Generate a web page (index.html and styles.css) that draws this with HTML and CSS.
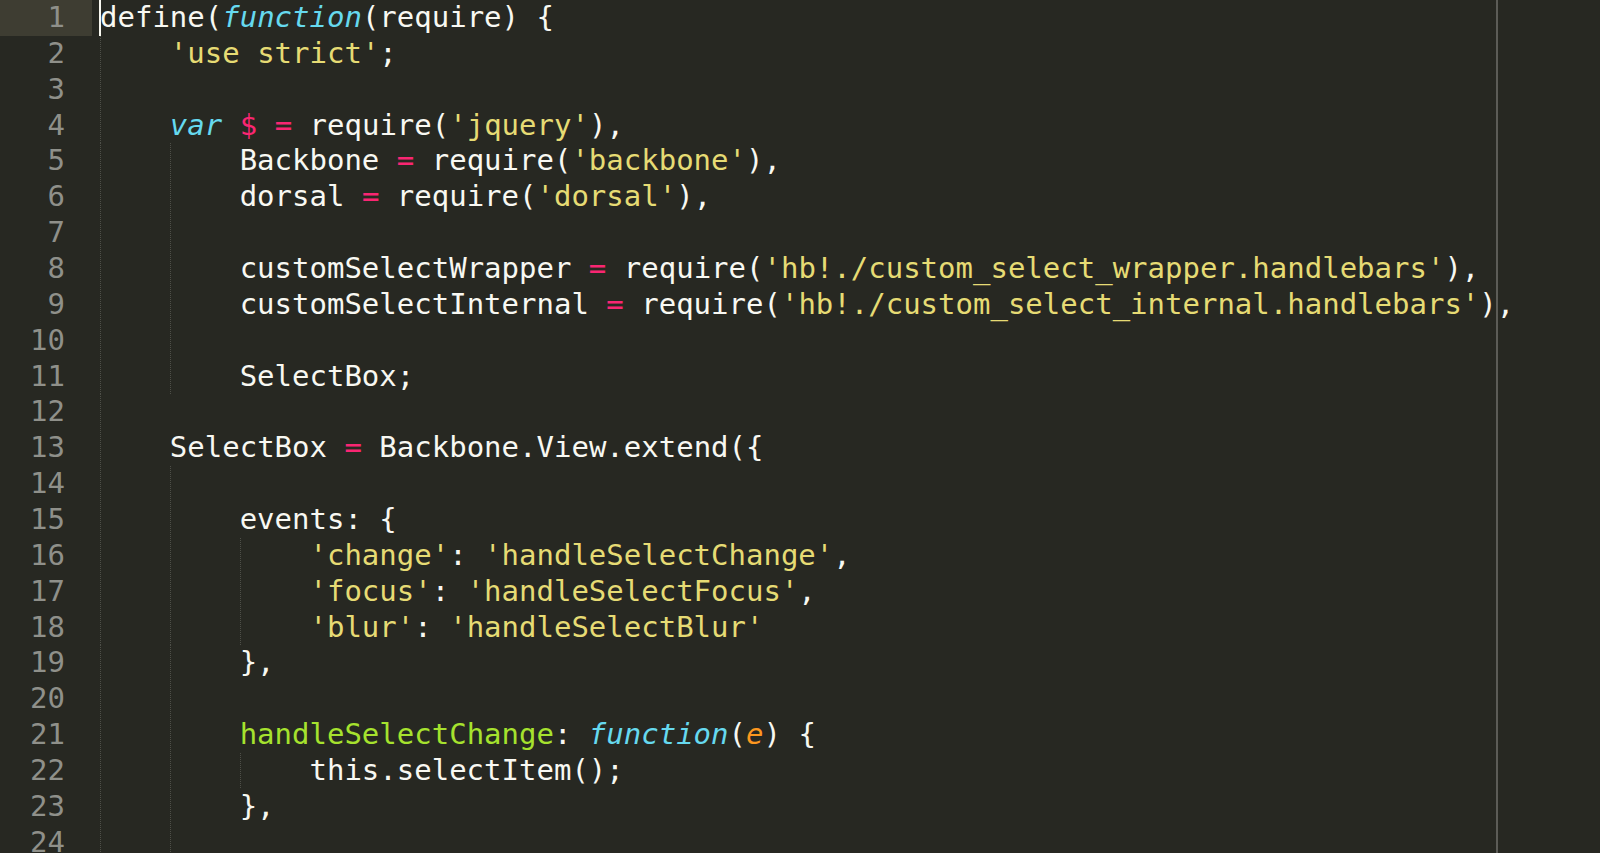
FILE: index.html
```html
<!DOCTYPE html>
<html>
<head>
<meta charset="utf-8">
<link rel="stylesheet" href="styles.css">
</head>
<body>
<div class="editor">
  <div class="ln cur"><span class="num">1</span><span class="code"><span class="cursor"></span><span class="t">define(<span class="kw">function</span>(require) {</span></span></div>
  <div class="ln"><span class="num">2</span><span class="code"><span class="ig"></span><span class="t"><span class="s">'use strict'</span>;</span></span></div>
  <div class="ln"><span class="num">3</span><span class="code"><span class="ig"></span></span></div>
  <div class="ln"><span class="num">4</span><span class="code"><span class="ig"></span><span class="t"><span class="kw">var</span> <span class="op">$</span> <span class="op">=</span> require(<span class="s">'jquery'</span>),</span></span></div>
  <div class="ln"><span class="num">5</span><span class="code"><span class="ig"></span><span class="ig"></span><span class="t">Backbone <span class="op">=</span> require(<span class="s">'backbone'</span>),</span></span></div>
  <div class="ln"><span class="num">6</span><span class="code"><span class="ig"></span><span class="ig"></span><span class="t">dorsal <span class="op">=</span> require(<span class="s">'dorsal'</span>),</span></span></div>
  <div class="ln"><span class="num">7</span><span class="code"><span class="ig"></span><span class="ig"></span></span></div>
  <div class="ln"><span class="num">8</span><span class="code"><span class="ig"></span><span class="ig"></span><span class="t">customSelectWrapper <span class="op">=</span> require(<span class="s">'hb!./custom_select_wrapper.handlebars'</span>),</span></span></div>
  <div class="ln"><span class="num">9</span><span class="code"><span class="ig"></span><span class="ig"></span><span class="t">customSelectInternal <span class="op">=</span> require(<span class="s">'hb!./custom_select_internal.handlebars'</span>),</span></span></div>
  <div class="ln"><span class="num">10</span><span class="code"><span class="ig"></span><span class="ig"></span></span></div>
  <div class="ln"><span class="num">11</span><span class="code"><span class="ig"></span><span class="ig"></span><span class="t">SelectBox;</span></span></div>
  <div class="ln"><span class="num">12</span><span class="code"><span class="ig"></span></span></div>
  <div class="ln"><span class="num">13</span><span class="code"><span class="ig"></span><span class="t">SelectBox <span class="op">=</span> Backbone.View.extend({</span></span></div>
  <div class="ln"><span class="num">14</span><span class="code"><span class="ig"></span><span class="ig"></span></span></div>
  <div class="ln"><span class="num">15</span><span class="code"><span class="ig"></span><span class="ig"></span><span class="t">events: {</span></span></div>
  <div class="ln"><span class="num">16</span><span class="code"><span class="ig"></span><span class="ig"></span><span class="ig"></span><span class="t"><span class="s">'change'</span>: <span class="s">'handleSelectChange'</span>,</span></span></div>
  <div class="ln"><span class="num">17</span><span class="code"><span class="ig"></span><span class="ig"></span><span class="ig"></span><span class="t"><span class="s">'focus'</span>: <span class="s">'handleSelectFocus'</span>,</span></span></div>
  <div class="ln"><span class="num">18</span><span class="code"><span class="ig"></span><span class="ig"></span><span class="ig"></span><span class="t"><span class="s">'blur'</span>: <span class="s">'handleSelectBlur'</span></span></span></div>
  <div class="ln"><span class="num">19</span><span class="code"><span class="ig"></span><span class="ig"></span><span class="t">},</span></span></div>
  <div class="ln"><span class="num">20</span><span class="code"><span class="ig"></span><span class="ig"></span></span></div>
  <div class="ln"><span class="num">21</span><span class="code"><span class="ig"></span><span class="ig"></span><span class="t"><span class="fn">handleSelectChange</span>: <span class="kw">function</span>(<span class="arg">e</span>) {</span></span></div>
  <div class="ln"><span class="num">22</span><span class="code"><span class="ig"></span><span class="ig"></span><span class="ig"></span><span class="t">this.selectItem();</span></span></div>
  <div class="ln"><span class="num">23</span><span class="code"><span class="ig"></span><span class="ig"></span><span class="t">},</span></span></div>
  <div class="ln"><span class="num">24</span><span class="code"><span class="ig"></span><span class="ig"></span></span></div>
</div>
</body>
</html>
```

FILE: styles.css
```css
html, body {
  margin: 0;
  padding: 0;
  background: #272822;
  overflow: hidden;
}

.editor {
  width: 1600px;
  height: 853px;
  overflow: hidden;
  font-family: "DejaVu Sans Mono", "Liberation Mono", monospace;
  font-size: 29px;
  color: #f8f8f2;
  background-color: #272822;
  background-image: linear-gradient(to right,
    transparent 1496px, #5c5c57 1496px, #5c5c57 1498px, transparent 1498px);
}

.ln {
  display: flex;
  height: 35.87px;
  line-height: 35.87px;
}

.num {
  flex: 0 0 92px;
  box-sizing: border-box;
  padding-right: 27px;
  text-align: right;
  color: #8f908a;
}

.cur .num {
  background: #3e3d32;
}

.code {
  display: flex;
  padding-left: 8px;
  flex: 1 1 auto;
}

.ig {
  flex: 0 0 4ch;
  height: 100%;
  background-image: linear-gradient(to bottom, #4e4f48 50%, transparent 50%);
  background-size: 1px 2px;
  background-repeat: repeat-y;
  background-position: 0 0;
}

.cursor {
  flex: 0 0 2px;
  width: 2px;
  margin-left: -1px;
  margin-right: -1px;
  background: #f8f8f0;
}

.t {
  white-space: pre;
}

.kw {
  color: #66d9ef;
  font-style: italic;
}

.s {
  color: #e6db74;
}

.op {
  color: #f92672;
}

.fn {
  color: #a6e22e;
}

.arg {
  color: #fd971f;
  font-style: italic;
}
```
